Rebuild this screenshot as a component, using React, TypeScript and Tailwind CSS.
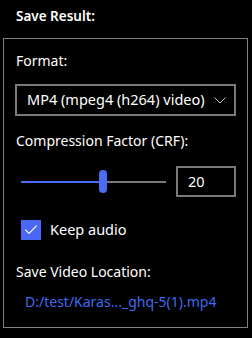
import { Check } from 'lucide-react';

export default function App() {
  return (
    <div className="w-[252px] h-[338px] bg-black text-white font-['Noto_Sans',sans-serif] overflow-hidden">
      <div className="h-[38px] pl-[16px] pt-[6px] text-[13.5px] leading-[20px] font-semibold">Save Result:</div>

      <div className="ml-[3px] w-[245px] h-[290px] border border-[#808080] px-[11px] pt-[11px]">
        {/* Formato */}
        <div className="h-[20px] flex items-center text-[14px] pl-[1px]">Format:</div>
        <div className="mt-[14px] h-[32px] border-2 border-[#7a7a7a] flex items-center justify-between pl-[10px] pr-[7px]">
          <span className="text-[14.5px]">MP4 (mpeg4 (h264) video)</span>
          <svg width="12" height="7" viewBox="0 0 12 7" className="mr-[1px]">
            <polyline points="0.5,0.5 6,6 11.5,0.5" fill="none" stroke="#c8c8c8" strokeWidth="1" />
          </svg>
        </div>

        {/* CRF */}
        <div className="mt-[14px] h-[20px] flex items-center text-[14px] pl-[1px]">Compression Factor (CRF):</div>
        <div className="mt-[16px] h-[31px] flex items-center">
          <div className="relative w-[145px] h-[2px] ml-[6px] bg-[#7a7a7a]">
            <div className="absolute left-0 top-0 h-[2px] w-[82px] bg-[#4a6cf7]" />
            <div className="absolute left-[78px] top-[-11px] w-[8px] h-[23px] rounded-full bg-[#4a6cf7]" />
          </div>
          <div className="ml-auto w-[60px] h-[31px] border-2 border-[#7a7a7a] flex items-center pl-[10px] text-[14.5px]">20</div>
        </div>

        {/* Audio */}
        <div className="mt-[23px] h-[20px] flex items-center gap-[9px] pl-[6px]">
          <div className="w-[20px] h-[20px] bg-[#4a67f5] flex items-center justify-center">
            <Check className="w-[16px] h-[16px] text-white" strokeWidth={1.6} />
          </div>
          <span className="text-[14.5px]">Keep audio</span>
        </div>

        {/* Ubicación */}
        <div className="mt-[21px] h-[20px] flex items-center text-[14px] pl-[1px]">Save Video Location:</div>
        <div className="mt-[10px] h-[20px] flex items-center text-[14px] pl-[10px] text-[#3f6af0]">
          D:/test/Karas..._ghq-5(1).mp4
        </div>
      </div>
    </div>
  );
}
